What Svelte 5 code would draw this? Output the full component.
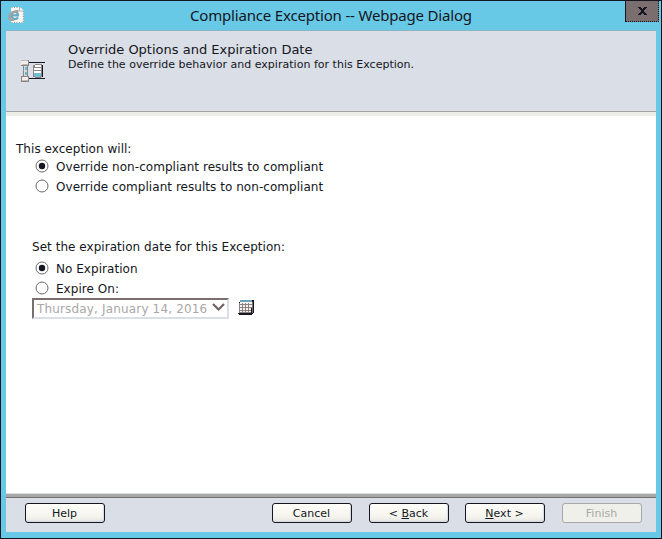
<script>
  let override = $state('compliant');
  let expiry = $state('none');
</script>

{#snippet radio(checked)}
  <svg class="radio" width="14" height="14" viewBox="0 0 14 14">
    <circle cx="7" cy="7" r="6" fill="#fff" stroke="#6f6869" />
    {#if checked}<circle cx="7" cy="7" r="3.2" fill="#141622" />{/if}
  </svg>
{/snippet}

<div class="window">
  <div class="titlebar">
    <svg class="ie" width="18" height="18" viewBox="0 0 18 18">
      <path d="M4.500 1.500H13l3 3v12H4.500z" fill="#f8f7f3" stroke="#f5f4ee" />
      <path d="M4.500 1.500H13M4.500 16.500h11.500M16.300 5v12" fill="none" stroke="#9b8f8e" stroke-dasharray="1 1.500" />
      <path d="M12.500 1.500v3.500h3.500" fill="#fff" stroke="#b5b0ae" />
      <path d="M4.500 9.300h6.500C11 4.800 4.500 4.800 4.500 9.300C4.500 13.500 9 14 11 11.500" fill="none" stroke="#68a9c4" stroke-width="2.200" />
      <path d="M7 13.500C-1 15.500 .5 6 11.500 5" fill="none" stroke="#a3a3a3" stroke-width="2.400" />
    </svg>
    <h1>Compliance Exception -- Webpage Dialog</h1>
    <button class="close" aria-label="Close">
      <svg width="9" height="8" viewBox="0 0 9 8" fill="#141622"><path d="M0 0h3v1h1v1h1V1h1V0h3v1H8v1H7v1H6v2h1v1h1v1h1v1H6V7H5V6H4v1H3v1H0V7h1V6h1V5h1V3H2V2H1V1H0z" /></svg>
    </button>
  </div>
  <div class="page">
    <header>
      <svg class="wizard" width="25" height="23" viewBox="0 0 25 23" shape-rendering="crispEdges">
        <path d="M8 2h16v1H8zM8 18h16v1H8z" fill="#141622" />
        <path d="M2 6h5v11H2z" fill="#d9dcdc" /><path d="M2 6h1v11H2zM6 6h1v11H6z" fill="#8b8584" />
        <path d="M4 7h2v3H4zM4 12h2v3H4z" fill="#68b9d7" />
        <path d="M0 0h8v6H0zM0 16h8v6H0z" fill="#efeeea" />
        <path d="M0 5h8v1H0zM7 0h1v6H7zM0 16h8v1H0zM0 21h8v1H0zM7 16h1v6H7zM0 17h1v5H0z" fill="#8b8584" />
        <path d="M0 0h7v1H0zM1 4h6v1H1zM1 20h6v1H1z" fill="#bbb7b4" />
        <path d="M14 4h7v1h1v12h-2v1h-6v-1h-2V5h2z" fill="#8b8584" />
        <path d="M14 5h6v2h-6zM13 8h7v2h-7zM13 11h7v2h-7z" fill="#fff" />
        <path d="M13 13h7v3h-1v1h-5v-1h-1z" fill="#72bdd5" />
        <path d="M21 5h1v12h-1z" fill="#141622" />
      </svg>
      <div>
        <h2>Override Options and Expiration Date</h2>
        <p class="sub">Define the override behavior and expiration for this Exception.</p>
      </div>
    </header>
    <div class="strip"></div>
    <main>
      <p class="q1">This exception will:</p>
      <button class="option" onclick={() => (override = 'compliant')}>{@render radio(override === 'compliant')}<span>Override non-compliant results to compliant</span></button>
      <button class="option" onclick={() => (override = 'non')}>{@render radio(override === 'non')}<span>Override compliant results to non-compliant</span></button>
      <p class="q2">Set the expiration date for this Exception:</p>
      <button class="option" onclick={() => (expiry = 'none')}>{@render radio(expiry === 'none')}<span>No Expiration</span></button>
      <button class="option" onclick={() => (expiry = 'on')}>{@render radio(expiry === 'on')}<span>Expire On:</span></button>
      <div class="date">
        <div class="select"><span>Thursday, January 14, 2016</span>
          <svg width="13" height="9" viewBox="0 0 13 9"><path d="M1 1l5.500 5.500L12 1" fill="none" stroke="#6f6263" stroke-width="2.200" /></svg>
        </div>
        <svg width="16" height="15" viewBox="0 0 16 15" shape-rendering="crispEdges">
          <path d="M2 0h14v13h-1v1h-1v1H1v-1H0v-1h1V2h1z" fill="#141622" />
          <path d="M2 0h12v2H2z" fill="#68a5bd" />
          <path d="M2 2h12v6h-1v5H1V8h1z" fill="#f5f4ee" />
          <path d="M1 3h1v10H1zM2 4h12v1H2zM2 7h12v1H2zM1 10h12v1H1zM1 12h12v1H1zM4 3h1v10H4zM7 3h1v10H7zM10 3h1v10h-1z" fill="#8b8180" />
          <path d="M14 2h1v11h-1z" fill="#7b6e6e" />
        </svg>
      </div>
    </main>
    <div class="rule"></div>
    <footer>
      <button class="btn help"><span>Help</span></button>
      <button class="btn cancel"><span>Cancel</span></button>
      <button class="btn back"><span>&lt; <u>B</u>ack</span></button>
      <button class="btn next"><span><u>N</u>ext &gt;</span></button>
      <button class="btn finish" disabled><span>Finish</span></button>
    </footer>
  </div>
</div>

<style>
  :global(body) { margin: 0; }
  * { box-sizing: border-box; }
  h1, h2, p { margin: 0; font-weight: 400; white-space: nowrap; }
  button { font: inherit; letter-spacing: inherit; color: inherit; padding: 0; }
  svg { display: block; flex: none; }
  .window { width: 662px; height: 539px; border: 1px solid #141622; background: #68c9e7; padding: 0 5px 7px; font-family: "DejaVu Sans", Verdana, sans-serif; font-size: 12px; letter-spacing: 0.04px; line-height: 16px; color: #141622; }
  .titlebar { height: 29px; display: flex; align-items: flex-start; }
  .ie { margin: 5px 0 0 1px; }
  h1 { font: 15px/20px "Noto Sans", sans-serif; letter-spacing: -0.18px; margin: 4px 0 0 165px; width: 284px; }
  .close { margin-left: auto; margin-right: -3px; width: 34px; height: 21px; border: 1px dotted #141622; border-left-style: solid; border-top: 0; background: #7b6e6e; display: flex; justify-content: center; align-items: flex-start; padding-top: 6px; }
  .page { height: 502px; display: flex; flex-direction: column; background: #fff; border-top: 1px solid #8bb5c5; }
  header { height: 80px; background: #dadee6; display: flex; }
  .wizard { margin: 29px 22px 0 15px; }
  header > div { padding-top: 11px; }
  h2 { font-size: 13px; line-height: 15px; letter-spacing: 0; }
  .sub { font-size: 11px; line-height: 14px; letter-spacing: 0.02px; padding-top: 1px; }
  .strip { height: 5px; border-top: 1px solid #a3a3a3; background: repeating-conic-gradient(#f3f3ec 0 25%, #e9e9e3 0 50%) 0 0 / 2px 2px; }
  main { height: 377px; padding: 25px 0 0 10px; }
  .option { display: flex; align-items: center; height: 20px; border: 0; background: none; margin-left: 19px; }
  .option span { margin-left: 7px; white-space: nowrap; }
  .radio { margin-bottom: 2px; }
  .q2 { margin: 42px 0 4px 16px; }
  .date { display: flex; margin: -1px 0 0 16px; }
  .select { width: 197px; height: 21px; border: 2px solid #7b6e6e; border-right-color: #dadee6; border-bottom-color: #dadee6; display: flex; align-items: center; justify-content: space-between; padding: 1px 2px 0 3px; color: #a8a8a6; white-space: nowrap; margin-right: 9px; letter-spacing: 0.16px; }
  .select svg { margin-bottom: 3px; }
  .date > svg { margin-top: 2px; }
  .rule { height: 5px; border-bottom: 1px solid #7b6e6e; border-top: 1px solid #dadee6; background: #a8a8a6; }
  footer { flex: 1; background: #dadee6; display: flex; padding: 5px 0 0 19px; }
  .btn { width: 80px; height: 20px; border: 1px solid #141622; border-radius: 3px; background: linear-gradient(#fffefa, #f3f3ec 75%, #e2e4e6); font: 11px/16px "DejaVu Sans", sans-serif; letter-spacing: 0; padding-top: 1px; box-shadow: inset -1px -1px 1px #d4d9e2; }
  .btn span { margin-left: -1px; }
  .cancel { margin-left: 167px; }
  .back { margin-left: 17px; }
  .next { margin-left: 16px; }
  .finish { margin-left: 17px; color: #a8a8a6; border-color: #a8a8a6; background: #f0f0ea; box-shadow: none; }
</style>
